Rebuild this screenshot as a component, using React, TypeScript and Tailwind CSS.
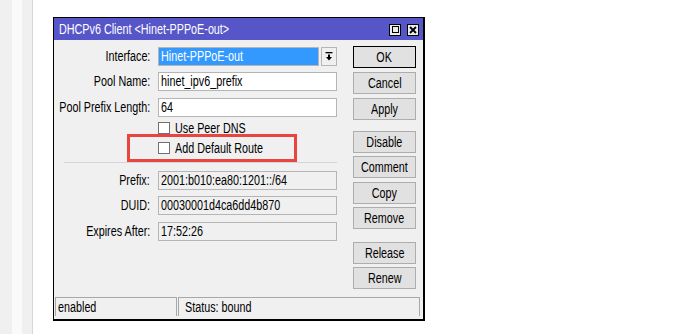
import React from "react";

const T = ({ children, o = "origin-left" }: { children: React.ReactNode; o?: string }) => (
  <span className={`inline-block whitespace-nowrap scale-x-[0.77] ${o}`}>{children}</span>
);

const Btn = ({ label, cls = "", def = false }: { label: string; cls?: string; def?: boolean }) => (
  <div
    className={`h-[22px] w-[63px] flex items-center justify-center text-[14px] leading-none text-black bg-[#e1e1e1] ${
      def ? "border border-black" : "border border-[#adadad]"
    } ${cls}`}
  >
    <T o="origin-center">{label}</T>
  </div>
);

const Row = ({ label, children, cls = "" }: { label: string; children: React.ReactNode; cls?: string }) => (
  <div className={`flex items-center ${cls}`}>
    <div className="w-[96px] flex justify-end text-[14px] leading-none text-black">
      <T o="origin-right">{label}</T>
    </div>
    <div className="ml-[8px] flex">{children}</div>
  </div>
);

const Field = ({ value, ro = false }: { value: string; ro?: boolean }) => (
  <div
    className={`h-[19px] w-[179px] flex items-center pl-[2px] text-[14px] leading-none text-black border border-[#b5b5b5] overflow-hidden ${
      ro ? "bg-[#f0f0f0]" : "bg-white"
    }`}
  >
    <T>{value}</T>
  </div>
);

const Check = ({ label }: { label: string }) => (
  <div className="flex items-center h-[20px]">
    <div className="w-[104px]" />
    <div className="w-[12px] h-[12px] bg-white border border-[#707070]" />
    <div className="ml-[5px] text-[14px] leading-none text-black">
      <T>{label}</T>
    </div>
  </div>
);

export default function App() {
  return (
    <div className="flex w-[673px] h-[334px] bg-white overflow-hidden font-['Liberation_Sans',Arial,sans-serif]">
      <div className="w-[12px] bg-[#f0f0f0]" />
      <div className="w-[10px] bg-[#fafafa]" />
      <div className="w-[10px] bg-[#f0f0f0]" />
      <div className="w-px bg-[#d8d8d8]" />
      <div className="pl-[20px] pt-[17px]">
        <div className="w-[372px] h-[304px] border-l border-t border-r-2 border-b-2 border-black flex flex-col">
          {/* title bar */}
          <div className="h-[22px] bg-[#5656c9] flex items-center pl-[5px] pr-[4px]">
            <div className="text-white text-[14px] leading-none flex-1">
              <T>DHCPv6 Client &lt;Hinet-PPPoE-out&gt;</T>
            </div>
            <div className="flex gap-[6px] mt-[1px]">
              <div className="w-[12px] h-[12px] bg-[#ececec] border border-black flex items-center justify-center">
                <div className="w-[7px] h-[7px] border border-black" />
              </div>
              <div className="w-[12px] h-[12px] bg-[#ececec] border border-black flex items-center justify-center">
                <svg width="8" height="8" viewBox="0 0 8 8">
                  <path d="M1 1L7 7M7 1L1 7" stroke="black" strokeWidth="1.8" />
                </svg>
              </div>
            </div>
          </div>
          {/* body */}
          <div className="flex-1 bg-[#f0f0f0] flex flex-col relative">
            <div className="flex flex-1 pt-[6px]">
              <div className="w-[283px] flex flex-col">
                <Row label="Interface:" cls="h-[20px]">
                  <div className="h-[19px] w-[161px] bg-[#3399ff] border border-[#b5b5b5] flex items-center pl-[2px] text-[14px] leading-none text-white">
                    <T>Hinet-PPPoE-out</T>
                  </div>
                  <div className="ml-[2px] h-[19px] w-[16px] bg-[#f0f0f0] border border-[#b5b5b5] flex items-center justify-center">
                    <svg width="8" height="9" viewBox="0 0 8 9">
                      <rect x="0.5" y="0" width="7" height="1.3" fill="black" />
                      <path d="M3 2.5H5V5H7L4 8.5L1 5H3Z" fill="black" />
                    </svg>
                  </div>
                </Row>
                <Row label="Pool Name:" cls="h-[20px] mt-[5px]">
                  <Field value="hinet_ipv6_prefix" />
                </Row>
                <Row label="Pool Prefix Length:" cls="h-[20px] mt-[6px]">
                  <Field value="64" />
                </Row>
                <div className="mt-[1px]">
                  <Check label="Use Peer DNS" />
                  <Check label="Add Default Route" />
                </div>
                <div className="ml-[10px] mt-[4px] w-[273px] h-px bg-[#d5d5d5]" />
                <Row label="Prefix:" cls="h-[20px] mt-[7px]">
                  <Field value="2001:b010:ea80:1201::/64" ro />
                </Row>
                <Row label="DUID:" cls="h-[20px] mt-[5px]">
                  <Field value="00030001d4ca6dd4b870" ro />
                </Row>
                <Row label="Expires After:" cls="h-[20px] mt-[6px]">
                  <Field value="17:52:26" ro />
                </Row>
              </div>
              <div className="ml-[16px] flex flex-col">
                <Btn label="OK" def />
                <Btn label="Cancel" cls="mt-[4px]" />
                <Btn label="Apply" cls="mt-[4px]" />
                <Btn label="Disable" cls="mt-[11px]" />
                <Btn label="Comment" cls="mt-[3px]" />
                <Btn label="Copy" cls="mt-[4px]" />
                <Btn label="Remove" cls="mt-[3px]" />
                <Btn label="Release" cls="mt-[13px]" />
                <Btn label="Renew" cls="mt-[3px]" />
              </div>
            </div>
            {/* status bar */}
            <div className="flex pl-px pr-[3px] pb-[3px] gap-px">
              <div className="w-[122px] h-[19px] border-t border-l border-r border-[#a8a8a8] flex items-center pl-[2px] text-[14px] leading-none text-black">
                <T>enabled</T>
              </div>
              <div className="flex-1 h-[19px] border-t border-l border-r border-[#a8a8a8] flex items-center pl-[6px] text-[14px] leading-none text-black">
                <T>Status: bound</T>
              </div>
            </div>
            {/* annotation */}
            <div className="absolute left-[73px] top-[94px] w-[170px] h-[28px] border-[3px] border-[#e84440]" />
          </div>
        </div>
      </div>
    </div>
  );
}
